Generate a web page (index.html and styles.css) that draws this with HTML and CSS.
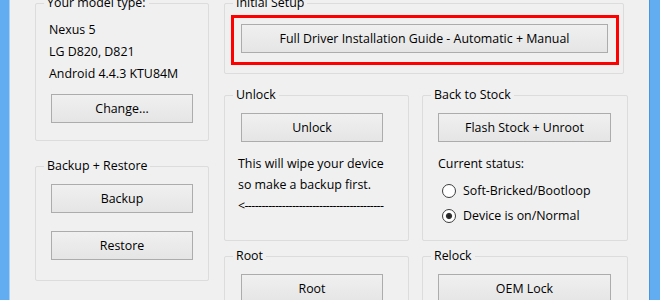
FILE: index.html
```html
<!DOCTYPE html>
<html>
<head>
<meta charset="utf-8">
<link rel="stylesheet" href="styles.css">
</head>
<body>
<div class="window">
  <div class="frame-left"></div>
  <div class="client">
    <div class="col-left">
      <section class="group g-model">
        <div class="caption">Your model type:</div>
        <div class="info">
          <div>Nexus 5</div>
          <div>LG D820, D821</div>
          <div>Android 4.4.3 KTU84M</div>
        </div>
        <button class="btn btn-sm btn-change">Change...</button>
      </section>
      <section class="group g-backup">
        <div class="caption">Backup + Restore</div>
        <button class="btn btn-sm btn-backup">Backup</button>
        <button class="btn btn-sm btn-restore">Restore</button>
      </section>
    </div>
    <div class="col-right">
      <section class="group g-setup">
        <div class="caption">Initial Setup</div>
        <div class="highlight">
          <button class="btn btn-wide">Full Driver Installation Guide - Automatic + Manual</button>
        </div>
      </section>
      <div class="row row-mid">
        <section class="group g-left g-tall">
          <div class="caption">Unlock</div>
          <button class="btn btn-sm btn-first">Unlock</button>
          <div class="note">
            <div>This will wipe your device</div>
            <div>so make a backup first.</div>
            <div class="arrow">&lt;-----------------------------------------</div>
          </div>
        </section>
        <section class="group g-right g-tall">
          <div class="caption">Back to Stock</div>
          <button class="btn btn-md btn-first">Flash Stock + Unroot</button>
          <div class="status">Current status:</div>
          <div class="radios">
            <div class="radio-row"><span class="radio"></span><span>Soft-Bricked/Bootloop</span></div>
            <div class="radio-row"><span class="radio checked"></span><span>Device is on/Normal</span></div>
          </div>
        </section>
      </div>
      <div class="row row-bottom">
        <section class="group g-left g-short">
          <div class="caption">Root</div>
          <button class="btn btn-sm btn-first">Root</button>
        </section>
        <section class="group g-right g-short">
          <div class="caption">Relock</div>
          <button class="btn btn-md btn-first">OEM Lock</button>
        </section>
      </div>
    </div>
  </div>
  <div class="frame-right"></div>
</div>
</body>
</html>
```
FILE: styles.css
```css
* { box-sizing: border-box; }
html, body {
  margin: 0;
  padding: 0;
  width: 660px;
  height: 300px;
  overflow: hidden;
  background: #f0f0f0;
}
body {
  font-family: "Open Sans", "Noto Sans", sans-serif;
  font-size: 12.4px;
  color: #000;
}
.window {
  display: flex;
  width: 660px;
  height: 300px;
}
.frame-left {
  width: 10px;
  flex: none;
  background: #62acf1;
  border-right: 1px solid #a8d0f4;
}
.frame-right {
  width: 11px;
  flex: none;
  background: #62acf1;
  border-left: 1px solid #4b95dc;
}
.client {
  width: 639px;
  flex: none;
  display: flex;
  align-items: flex-start;
  gap: 15px;
  padding: 3px 0 0 25px;
}
.col-left {
  width: 174px;
  flex: none;
  display: flex;
  flex-direction: column;
  gap: 25px;
}
.col-right {
  width: 404px;
  flex: none;
  display: flex;
  flex-direction: column;
}
.group {
  flex: none;
  border: 1px solid #dcdcdc;
  border-radius: 2px;
}
.caption {
  width: max-content;
  margin: -9px 0 0 8px;
  padding: 0 3px;
  height: 16px;
  line-height: 16px;
  background: #f0f0f0;
  white-space: nowrap;
}
.btn {
  display: block;
  height: 29px;
  padding: 0;
  margin: 0;
  border: 1px solid #acacac;
  border-radius: 0;
  background: linear-gradient(#f0f0f0, #e5e5e5);
  font: inherit;
  color: #000;
  text-align: center;
  line-height: 26px;
}
.btn-sm { width: 142px; }
.btn-md { width: 173px; margin-left: 15px; }
.btn-wide { width: 367px; }

.g-model { height: 138px; }
.info { margin-top: 8px; padding-left: 13px; line-height: 22px; }
.btn-change { margin: 9px 0 0 15px; }

.g-backup { height: 115px; }
.btn-backup { margin: 10px 0 0 15px; }
.btn-restore { margin: 18px 0 0 15px; }

.g-setup { width: 400px; height: 71px; }
.highlight {
  width: 388px;
  margin: 4px 0 0 6px;
  border: 3px solid #ff0000;
  padding: 6px 8px 9px 7px;
}

.row {
  flex: none;
  display: flex;
  gap: 13px;
}
.row-mid { margin-top: 21px; }
.row-bottom { margin-top: 15px; }
.g-left { width: 185px; }
.g-right { width: 206px; }
.g-tall { height: 146px; }
.g-short { height: 80px; }
.g-left .btn-first { margin: 10px 0 0 16px; }
.g-right .btn-first { margin-top: 10px; }

.note {
  margin-top: 11px;
  padding-left: 13px;
  line-height: 21px;
}
.arrow { letter-spacing: -0.6px; white-space: nowrap; }

.status {
  margin-top: 12px;
  padding-left: 15px;
  line-height: 20px;
}
.radios { margin-top: 4px; }
.radio-row {
  display: flex;
  align-items: center;
  gap: 7px;
  height: 25px;
  padding-left: 19px;
  line-height: 20px;
}
.radio {
  width: 14px;
  height: 14px;
  flex: none;
  border-radius: 50%;
  border: 1px solid #3c3c3c;
  background: #fff;
}
.radio.checked {
  background: radial-gradient(circle, #1a1a1a 0, #333 2.6px, #fff 3.6px);
}
```
